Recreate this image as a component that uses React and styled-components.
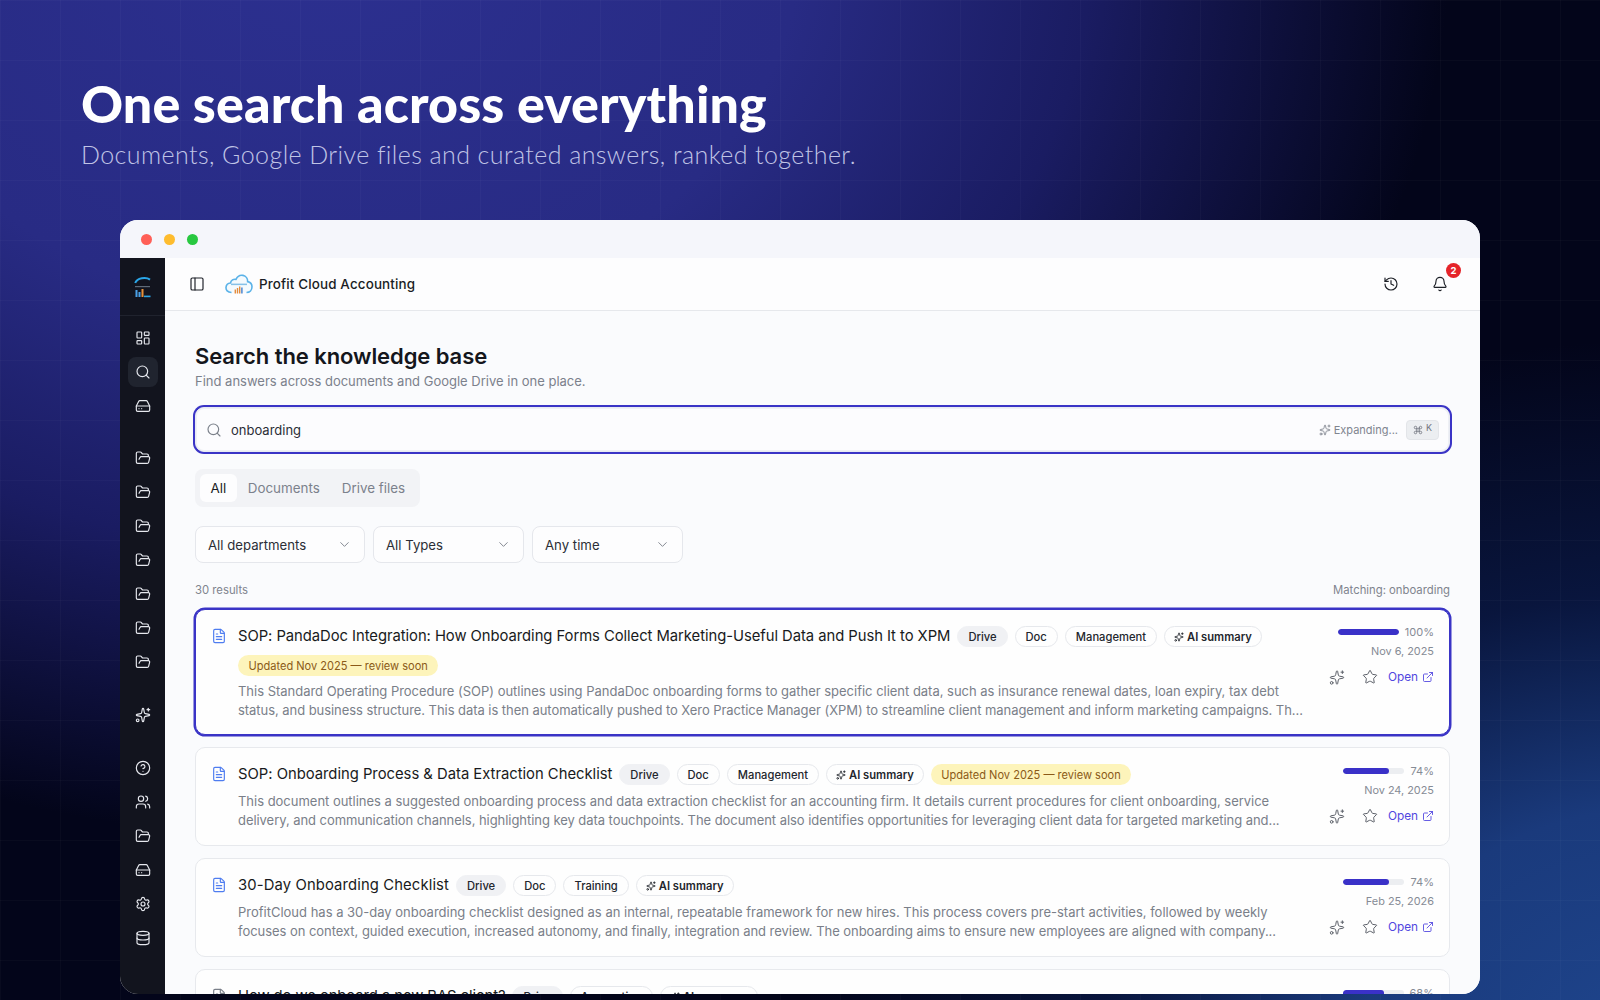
import React from 'react';
import styled, { createGlobalStyle } from 'styled-components';
import { LayoutDashboard, Search, HardDrive, FolderOpen, Sparkles, CircleHelp, Users, Settings, Database, PanelLeft, History, Bell, FileText, Star, ExternalLink, ChevronDown, Command } from 'lucide-react';

const Global = createGlobalStyle`
  html, body { margin: 0; padding: 0; height: 1000px; overflow: hidden; background: #03051a; }
  * { box-sizing: border-box; }
  #root { height: 1000px; }
`;

const Page = styled.div`
  position: relative;
  width: 1600px;
  height: 1000px;
  overflow: hidden;
  font-family: Inter, "Noto Sans", sans-serif;
  background:
    linear-gradient(rgba(255,255,255,0.025) 1px, transparent 1px) 0 0 / 60px 60px,
    linear-gradient(90deg, rgba(255,255,255,0.025) 1px, transparent 1px) 0 0 / 60px 60px,
    radial-gradient(860px 720px at 1660px 1060px, #1f468e 0%, #1a3a7c 35%, rgba(12,30,80,0.65) 65%, rgba(3,5,26,0) 100%),
    radial-gradient(1120px 900px at 330px -60px, #2c3090 0%, #282b84 42%, #1a1c62 68%, rgba(3,5,26,0) 100%),
    #03051a;
`;

const Hero = styled.header`
  padding: 70px 0 0 81px;
  height: 220px;
`;

const Headline = styled.h1`
  margin: 0;
  font-family: Lato, sans-serif;
  font-weight: 900;
  font-size: 52px;
  line-height: 66px;
  letter-spacing: 0.1px;
  color: #fff;
`;

const Lead = styled.p`
  margin: 1px 0 0;
  font-family: Lato, sans-serif;
  font-weight: 300;
  font-size: 25px;
  line-height: 34px;
  letter-spacing: 0.42px;
  color: #c0c4e6;
`;

const Win = styled.section`
  margin-left: 120px;
  width: 1360px;
  height: 774px;
  border-radius: 18px;
  overflow: hidden;
  display: flex;
  flex-direction: column;
  background: #f6f7fb;
`;

const TitleBar = styled.div`
  height: 38px;
  flex: none;
  display: flex;
  align-items: center;
  gap: 12px;
  padding: 0 0 0 21px;
  background: #f5f6fb;
`;

const Dot = styled.span`
  width: 11px;
  height: 11px;
  border-radius: 50%;
  background: ${p => p.$c};
`;

const Body = styled.div`
  flex: 1;
  min-height: 0;
  display: flex;
`;

const Side = styled.nav`
  width: 45px;
  flex: none;
  background: #12141e;
  display: flex;
  flex-direction: column;
  align-items: center;
`;

const SideLogo = styled.div`
  height: 58px;
  width: 100%;
  flex: none;
  display: flex;
  align-items: center;
  justify-content: center;
  border-bottom: 1px solid #20232e;
`;

const SideGroup = styled.div`
  display: flex;
  flex-direction: column;
  gap: 4px;
  margin-top: ${p => p.$mt}px;
`;

const SideBtn = styled.div`
  width: 30px;
  height: 30px;
  border-radius: 8px;
  display: flex;
  align-items: center;
  justify-content: center;
  color: #e6e8ee;
  background: ${p => (p.$on ? '#20242f' : 'transparent')};
`;

const Main = styled.main`
  flex: 1;
  min-width: 0;
  display: flex;
  flex-direction: column;
  background: #fafbfd;
`;

const TopBar = styled.div`
  height: 53px;
  flex: none;
  display: flex;
  align-items: center;
  padding: 0 32px 0 24px;
  background: #fdfdfe;
  border-bottom: 1px solid #e6e8ec;
`;

const Brand = styled.span`
  margin-left: 6px;
  font-family: Inter, sans-serif;
  font-weight: 500;
  font-size: 13.4px;
  letter-spacing: 0.15px;
  color: #1a1d24;
`;

const CloudWrap = styled.span`
  display: flex;
  margin-left: 20px;
`;

const Spacer = styled.div`
  flex: 1;
`;

const TopIcon = styled.span`
  position: relative;
  display: flex;
  color: #1d2027;
  margin-left: ${p => p.$ml || 0}px;
`;

const Badge = styled.span`
  position: absolute;
  top: -13px;
  right: -13px;
  width: 15px;
  height: 15px;
  border-radius: 50%;
  background: #e5242a;
  color: #fff;
  font-size: 9.5px;
  font-weight: 700;
  display: flex;
  align-items: center;
  justify-content: center;
`;

const Content = styled.div`
  flex: 1;
  min-height: 0;
  overflow: hidden;
  padding: 30px 30px 0;
  display: flex;
  flex-direction: column;
  & > * { flex: none; }
`;

const PageTitle = styled.h2`
  margin: 0;
  font-family: Inter, sans-serif;
  font-weight: 600;
  font-size: 22px;
  line-height: 30px;
  letter-spacing: -0.08px;
  color: #14161c;
`;

const PageSub = styled.p`
  margin: 1px 0 0;
  font-size: 13px;
  line-height: 18px;
  color: #7c818c;
`;

const SearchBox = styled.div`
  margin-top: 17px;
  height: 45px;
  border-radius: 9px;
  background: #fcfcfe;
  border: 1px solid #e8eaf2;
  box-shadow: 0 0 0 2px #3a34c6, inset 0 0 0 1px #eef0f5;
  display: flex;
  align-items: center;
  padding: 0 10px 0 10px;
  color: #7b808a;
`;

const Query = styled.span`
  margin-left: 9px;
  font-size: 13px;
  color: #2b2e36;
  flex: 1;
`;

const Hint = styled.span`
  display: flex;
  align-items: center;
  gap: 3px;
  font-size: 11px;
  color: #80858f;
`;

const Kbd = styled.span`
  margin-left: 5px;
  height: 20px;
  width: 33px;
  border-radius: 4px;
  background: #eceef1;
  border: 1px solid #e3e5e9;
  display: flex;
  align-items: center;
  justify-content: center;
  gap: 3px;
  font-size: 9px;
  color: #71757f;
`;

const KbdKey = styled.span`
  margin-top: -4px;
`;

const Tabs = styled.div`
  margin-top: 17px;
  align-self: flex-start;
  height: 38px;
  border-radius: 8px;
  background: #f2f3f6;
  padding: 5px 4px 5px 5px;
  display: flex;
`;

const Tab = styled.span`
  height: 28px;
  padding: 0 ${p => p.$px}px;
  border-radius: 6px;
  display: flex;
  align-items: center;
  font-size: 13.4px;
  color: ${p => (p.$on ? '#1a1d24' : '#7c818c')};
  background: ${p => (p.$on ? '#fdfdfe' : 'transparent')};
`;

const Filters = styled.div`
  margin-top: 19px;
  display: flex;
  gap: 8px;
`;

const Select = styled.div`
  width: ${p => p.$w}px;
  height: 37px;
  border: 1px solid #e5e7ec;
  border-radius: 8px;
  background: #fdfdfe;
  display: flex;
  align-items: center;
  justify-content: space-between;
  padding: 0 12px;
  font-size: 13.2px;
  color: #2b2e36;
  & > svg { color: #7b808a; }
`;

const ResultsBar = styled.div`
  margin-top: 18px;
  height: 18px;
  display: flex;
  justify-content: space-between;
  align-items: center;
  font-size: 11.3px;
  color: #7f848e;
`;

const Cards = styled.div`
  margin-top: 10px;
  display: flex;
  flex-direction: column;
  gap: 12px;
`;

const Card = styled.article`
  flex: none;
  border-radius: 10px;
  background: #fefefe;
  border: 1px solid ${p => (p.$sel ? '#3a34c6' : '#e7e9ed')};
  box-shadow: ${p => (p.$sel ? '0 0 0 1.5px #3a34c6' : 'none')};
  padding: 16px 15px 14px 15px;
  display: flex;
  min-height: 99px;
`;

const DocIcon = styled.span`
  flex: none;
  width: 27px;
  padding-top: 2px;
  color: ${p => p.$c || '#4f7df0'};
`;

const Mid = styled.div`
  flex: 1;
  min-width: 0;
`;

const TitleRow = styled.div`
  display: flex;
  flex-wrap: wrap;
  align-items: center;
  column-gap: 7px;
  row-gap: 8px;
  min-height: 21px;
`;

const CardTitle = styled.h3`
  margin: 0;
  font-size: 14.8px;
  line-height: 21px;
  font-weight: 425;
  color: #181a20;
  white-space: nowrap;
  letter-spacing: ${p => p.$ls}px;
`;

const Chip = styled.span`
  height: 21px;
  padding: 0 ${p => p.$px || 10}px;
  border-radius: 11px;
  border: 1px solid ${p => (p.$fill ? '#f0f1f4' : '#e6e8ec')};
  background: ${p => (p.$fill ? '#f0f1f4' : '#fefefe')};
  display: inline-flex;
  align-items: center;
  gap: 3px;
  font-size: 11.2px;
  font-weight: ${p => (p.$ai ? 600 : 500)};
  color: #23262d;
  white-space: nowrap;
`;

const Warn = styled.span`
  height: 21px;
  padding: 0 10.5px;
  border-radius: 11px;
  background: #fdf4bb;
  display: inline-flex;
  align-items: center;
  font-size: 11.05px;
  color: #8b5a18;
  white-space: nowrap;
`;

const Desc = styled.div`
  margin-top: ${p => p.$mt}px;
  font-size: 13px;
  line-height: 19px;
  color: #7a7f89;
`;

const DescLine = styled.div`
  white-space: nowrap;
  letter-spacing: ${p => p.$ls}px;
`;

const Right = styled.div`
  flex: none;
  width: 140px;
  margin-left: 12px;
  margin-top: ${p => (p.$sel ? -4 : -3)}px;
  display: flex;
  flex-direction: column;
  align-items: flex-end;
`;

const ScoreRow = styled.div`
  height: 20px;
  display: flex;
  align-items: center;
  gap: 6px;
  font-size: 11px;
  color: #868b95;
`;

const Track = styled.span`
  width: 61px;
  height: 6px;
  border-radius: 3px;
  background: #eceef1;
  overflow: hidden;
  display: block;
`;

const Fill = styled.span`
  display: block;
  height: 100%;
  border-radius: 3px;
  background: #3a31c8;
`;

const DateText = styled.div`
  height: 18px;
  line-height: 18px;
  font-size: 10.9px;
  color: #868b95;
`;

const Actions = styled.div`
  margin-top: 8px;
  height: 18px;
  display: flex;
  align-items: center;
  color: #5c6069;
`;

const ActionIcon = styled.span`
  display: flex;
  width: 16px;
  margin-right: ${p => p.$mr}px;
`;

const OpenLink = styled.span`
  display: inline-flex;
  align-items: center;
  gap: 4px;
  font-size: 11.8px;
  color: #5146e0;
`;

const SideLogoMark = () => (
  <svg width="17" height="22" viewBox="0 0 17 22" fill="none">
    <path d="M1.2 7 C3 1.8 12 0.6 16 3.6" stroke="#2aa6e8" strokeWidth="2" fill="none" />
    <rect x="1" y="10" width="15" height="1.2" fill="#5f6a78" />
    <rect x="1.5" y="14" width="2" height="7" fill="#4aa0e6" />
    <rect x="4.5" y="16" width="2" height="5" fill="#4aa0e6" />
    <rect x="7.5" y="13" width="2" height="8" fill="#e8923a" />
    <rect x="10" y="19.6" width="6.5" height="1.6" fill="#2aa6e8" />
  </svg>
);

const CloudMark = () => (
  <svg width="28" height="20" viewBox="0 0 28 20" fill="none">
    <path d="M6.5 18.5 C2.5 18.5 0.8 16 1 13.4 C1.2 11 3 9.2 5.5 9 C6 6.2 8.5 4.8 11 5.4 C12.4 2.4 15.2 0.8 18 1.4 C21 2 22.8 4.8 22.6 7.6 C25.4 8.2 27 10.2 27 12.8 C27 16 24.8 18.5 21.5 18.5" stroke="#5ab2e8" strokeWidth="1.6" fill="#f4fafe" />
    <rect x="6" y="9.6" width="16" height="1.5" fill="#62aee0" opacity=".75" />
    <rect x="9.6" y="15.5" width="1.4" height="4" fill="#e58c3c" />
    <rect x="11.8" y="14" width="1.4" height="5.5" fill="#e58c3c" />
    <rect x="14" y="12.5" width="1.4" height="7" fill="#e58c3c" />
    <rect x="16.2" y="13.5" width="1.4" height="6" fill="#3f7fd0" />
  </svg>
);

const rows = [
  {
    sel: true,
    ls: -0.047,
    title: 'SOP: PandaDoc Integration: How Onboarding Forms Collect Marketing-Useful Data and Push It to XPM',
    chips: ['Doc', 'Management'],
    warnWrap: true,
    lines: [
      ['This Standard Operating Procedure (SOP) outlines using PandaDoc onboarding forms to gather specific client data, such as insurance renewal dates, loan expiry, tax debt', -0.018],
      ['status, and business structure. This data is then automatically pushed to Xero Practice Manager (XPM) to streamline client management and inform marketing campaigns. Th...', -0.053],
    ],
    score: 100,
    date: 'Nov 6, 2025',
  },
  {
    ls: -0.01,
    title: 'SOP: Onboarding Process & Data Extraction Checklist',
    chips: ['Doc', 'Management'],
    warnInline: true,
    lines: [
      ['This document outlines a suggested onboarding process and data extraction checklist for an accounting firm. It details current procedures for client onboarding, service', -0.018],
      ['delivery, and communication channels, highlighting key data touchpoints. The document also identifies opportunities for leveraging client data for targeted marketing and...', -0.053],
    ],
    score: 74,
    date: 'Nov 24, 2025',
  },
  {
    ls: 0.13,
    title: '30-Day Onboarding Checklist',
    chips: ['Doc', 'Training'],
    lines: [
      ['ProfitCloud has a 30-day onboarding checklist designed as an internal, repeatable framework for new hires. This process covers pre-start activities, followed by weekly', -0.006],
      ['focuses on context, guided execution, increased autonomy, and finally, integration and review. The onboarding aims to ensure new employees are aligned with company...', -0.043],
    ],
    score: 74,
    date: 'Feb 25, 2026',
  },
  {
    ls: -0.07,
    title: 'How do we onboard a new BAS client?',
    chips: ['Accounting'],
    faded: true,
    lines: [],
    score: 68,
    date: '',
  },
];

const topNav = [LayoutDashboard, Search, HardDrive];
const folders = [1, 2, 3, 4, 5, 6, 7];
const bottomNav = [CircleHelp, Users, FolderOpen, HardDrive, Settings, Database];

export default function App() {
  return (
    <Page>
      <Global />
      <Hero>
        <Headline>One search across everything</Headline>
        <Lead>Documents, Google Drive files and curated answers, ranked together.</Lead>
      </Hero>
      <Win>
        <TitleBar>
          <Dot $c="#ff5f57" />
          <Dot $c="#febc2e" />
          <Dot $c="#28c840" />
        </TitleBar>
        <Body>
          <Side>
            <SideLogo><SideLogoMark /></SideLogo>
            <SideGroup $mt={7}>
              {topNav.map((I, i) => (
                <SideBtn key={i} $on={i === 1}><I size={16} strokeWidth={1.75} /></SideBtn>
              ))}
            </SideGroup>
            <SideGroup $mt={22}>
              {folders.map(f => (
                <SideBtn key={f}><FolderOpen size={16} strokeWidth={1.75} /></SideBtn>
              ))}
            </SideGroup>
            <SideGroup $mt={23}>
              <SideBtn><Sparkles size={16} strokeWidth={1.75} /></SideBtn>
            </SideGroup>
            <SideGroup $mt={23}>
              {bottomNav.map((I, i) => (
                <SideBtn key={i}><I size={16} strokeWidth={1.75} /></SideBtn>
              ))}
            </SideGroup>
          </Side>
          <Main>
            <TopBar>
              <PanelLeft size={16} strokeWidth={1.75} color="#1d2027" />
              <CloudWrap><CloudMark /></CloudWrap>
              <Brand>Profit Cloud Accounting</Brand>
              <Spacer />
              <TopIcon><History size={16} strokeWidth={1.75} /></TopIcon>
              <TopIcon $ml={33}><Bell size={16} strokeWidth={1.75} /><Badge>2</Badge></TopIcon>
            </TopBar>
            <Content>
              <PageTitle>Search the knowledge base</PageTitle>
              <PageSub>Find answers across documents and Google Drive in one place.</PageSub>
              <SearchBox>
                <Search size={16} strokeWidth={1.75} />
                <Query>onboarding</Query>
                <Hint>
                  <Sparkles size={12} strokeWidth={1.75} />
                  Expanding...
                  <Kbd><Command size={10} strokeWidth={2} /><KbdKey>K</KbdKey></Kbd>
                </Hint>
              </SearchBox>
              <Tabs>
                <Tab $on $px={10.5}>All</Tab>
                <Tab $px={11}>Documents</Tab>
                <Tab $px={11}>Drive files</Tab>
              </Tabs>
              <Filters>
                <Select $w={170}>All departments<ChevronDown size={15} strokeWidth={1.5} /></Select>
                <Select $w={151}>All Types<ChevronDown size={15} strokeWidth={1.5} /></Select>
                <Select $w={151}>Any time<ChevronDown size={15} strokeWidth={1.5} /></Select>
              </Filters>
              <ResultsBar>
                <span>30 results</span>
                <span>Matching: onboarding</span>
              </ResultsBar>
              <Cards>
                {rows.map((r, i) => (
                  <Card key={i} $sel={r.sel}>
                    <DocIcon $c={r.faded ? '#7a7f89' : undefined}><FileText size={16} strokeWidth={1.75} /></DocIcon>
                    <Mid>
                      <TitleRow>
                        <CardTitle $ls={r.ls}>{r.title}</CardTitle>
                        <Chip $fill>Drive</Chip>
                        {r.chips.map(c => <Chip key={c}>{c}</Chip>)}
                        <Chip $ai $px={9}><Sparkles size={10} strokeWidth={2} />AI summary</Chip>
                        {(r.warnInline || r.warnWrap) && <Warn>Updated Nov 2025 — review soon</Warn>}
                      </TitleRow>
                      <Desc $mt={r.warnWrap ? 6 : 7}>
                        {r.lines.map(([t, ls], k) => <DescLine key={k} $ls={ls}>{t}</DescLine>)}
                      </Desc>
                    </Mid>
                    <Right $sel={r.sel}>
                      <ScoreRow>
                        <Track><Fill style={{ width: `${r.score}%` }} /></Track>
                        {r.score}%
                      </ScoreRow>
                      <DateText>{r.date}</DateText>
                      <Actions>
                        <ActionIcon $mr={17}><Sparkles size={17} strokeWidth={1.5} /></ActionIcon>
                        <ActionIcon $mr={10}><Star size={16} strokeWidth={1.5} /></ActionIcon>
                        <OpenLink>Open<ExternalLink size={12} strokeWidth={1.75} /></OpenLink>
                      </Actions>
                    </Right>
                  </Card>
                ))}
              </Cards>
            </Content>
          </Main>
        </Body>
      </Win>
    </Page>
  );
}
